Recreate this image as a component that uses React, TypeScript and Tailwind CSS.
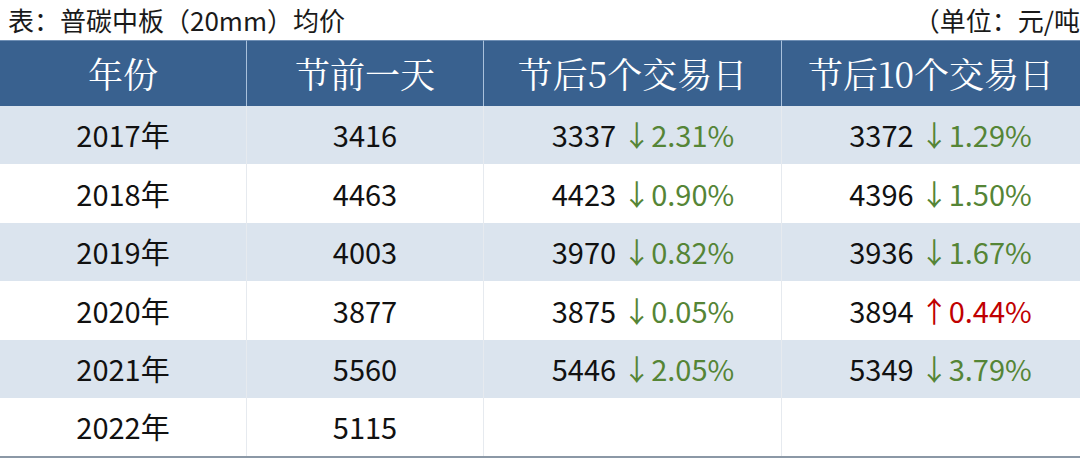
import React from 'react';

const rows = [
  { year: '2017年', before: '3416', d5: { v: '3337', pct: '2.31%', up: false }, d10: { v: '3372', pct: '1.29%', up: false } },
  { year: '2018年', before: '4463', d5: { v: '4423', pct: '0.90%', up: false }, d10: { v: '4396', pct: '1.50%', up: false } },
  { year: '2019年', before: '4003', d5: { v: '3970', pct: '0.82%', up: false }, d10: { v: '3936', pct: '1.67%', up: false } },
  { year: '2020年', before: '3877', d5: { v: '3875', pct: '0.05%', up: false }, d10: { v: '3894', pct: '0.44%', up: true } },
  { year: '2021年', before: '5560', d5: { v: '5446', pct: '2.05%', up: false }, d10: { v: '5349', pct: '3.79%', up: false } },
  { year: '2022年', before: '5115', d5: null, d10: null },
];

const sans = { fontFamily: '"Noto Sans CJK SC", "Noto Sans", sans-serif' };
const serif = { fontFamily: '"Noto Serif CJK SC", "Liberation Serif", "Noto Sans CJK SC", serif' };

type Change = { v: string; pct: string; up: boolean } | null;

const ChangeCell = ({ c }: { c: Change }) => {
  if (!c) return null;
  return (
    <span className="flex items-center">
      <span>{c.v}</span>
      <span className={`ml-[6px] ${c.up ? 'text-[#c00000]' : 'text-[#558536]'}`}>
        {c.up ? '↑' : '↓'}
        {c.pct}
      </span>
    </span>
  );
};

export default function App() {
  return (
    <div className="w-[1080px] h-[458px] bg-white overflow-hidden" style={sans}>
      <div className="h-[40px] flex items-center justify-between pl-[8px] text-[26px] text-[#1a1a1a] leading-none">
        <span>表：普碳中板（20mm）均价</span>
        <span className="whitespace-nowrap">（单位：元/吨</span>
      </div>
      <div className="grid grid-cols-[247px_237px_298px_298px]">
        {['年份', '节前一天', '节后5个交易日', '节后10个交易日'].map((h, i) => (
          <div
            key={h}
            className={`h-[66px] bg-[#39618f] text-white text-[35px] flex items-center justify-center border-t border-[#6f8fb5] ${i < 3 ? 'border-r border-r-[#a9c1dc]' : ''}`}
            style={serif}
          >
            {h}
          </div>
        ))}
        {rows.map((r, ri) => {
          const bg = ri % 2 === 0 ? 'bg-[#dbe4ee]' : 'bg-white';
          const cell = `h-[58.4px] ${bg} flex items-center justify-center text-[29px] text-[#111]`;
          return (
            <React.Fragment key={r.year}>
              <div className={`${cell} border-r border-[#e6eaef]`}>{r.year}</div>
              <div className={`${cell} border-r border-[#e6eaef]`}>{r.before}</div>
              <div className={`${cell} border-r border-[#e6eaef] pl-[21px]`}>
                <ChangeCell c={r.d5} />
              </div>
              <div className={`${cell} pl-[19px]`}>
                <ChangeCell c={r.d10} />
              </div>
            </React.Fragment>
          );
        })}
      </div>
      <div className="h-[2px] bg-[#8b98a6]" />
    </div>
  );
}
